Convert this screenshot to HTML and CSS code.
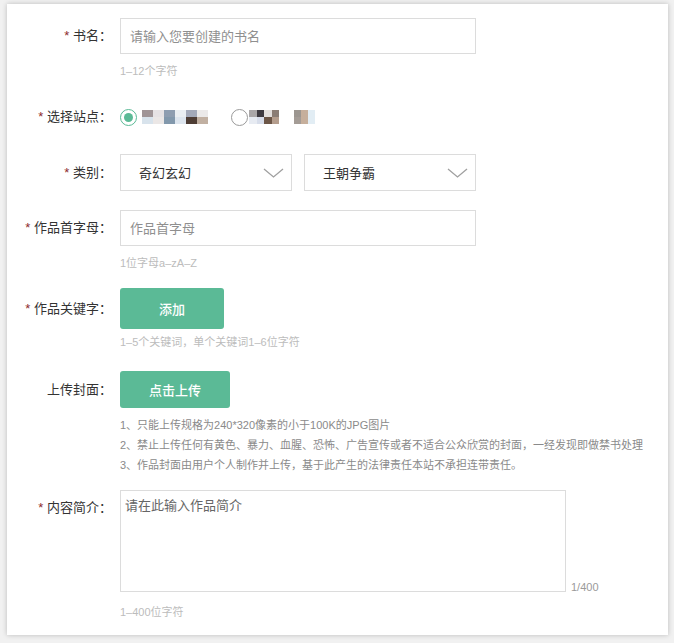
FILE: index.html
```html
<!DOCTYPE html>
<html lang="zh-CN">
<head>
<meta charset="utf-8">
<title>创建作品</title>
<link rel="stylesheet" href="styles.css">
</head>
<body>
<div class="card">
  <div class="row r1">
    <div class="label"><span class="req">*</span> 书名：</div>
    <input class="text-input" type="text" placeholder="请输入您要创建的书名">
    <div class="hint hint-gap">1–12个字符</div>
  </div>

  <div class="row r2">
    <div class="label"><span class="req">*</span> 选择站点：</div>
    <div class="radios">
      <span class="radio on"><span class="dot"></span></span>
      <span class="mosaic m1">
        <span class="col"><i class="a"></i><i class="b"></i></span>
        <span class="col"><i class="c"></i><i class="d"></i></span>
        <span class="col"><i class="e"></i><i class="f"></i></span>
        <span class="col"><i class="g"></i><i class="h"></i></span>
        <span class="col"><i class="i"></i><i class="j"></i></span>
        <span class="col"><i class="k"></i><i class="l"></i></span>
      </span>
      <span class="radio off"></span>
      <span class="mosaic m2">
        <span class="col"><i class="m"></i><i class="n"></i></span>
        <span class="col"><i class="o"></i><i class="p"></i></span>
        <span class="col"><i class="q"></i><i class="r"></i></span>
        <span class="col"><i class="s"></i><i class="t"></i></span>
      </span>
      <span class="mosaic m3">
        <span class="col"><i class="u"></i><i class="u2"></i></span>
        <span class="col"><i class="v"></i><i class="v"></i></span>
        <span class="col"><i class="w"></i><i class="w"></i></span>
      </span>
    </div>
  </div>

  <div class="row r3">
    <div class="label"><span class="req">*</span> 类别：</div>
    <div class="selects">
      <div class="select"><span>奇幻玄幻</span>
        <svg class="chev" width="21" height="10" viewBox="0 0 21 10"><polyline points="1,1 10.5,9 20,1" fill="none" stroke="#a0a0a0" stroke-width="1.3"/></svg>
      </div>
      <div class="select"><span>王朝争霸</span>
        <svg class="chev" width="21" height="10" viewBox="0 0 21 10"><polyline points="1,1 10.5,9 20,1" fill="none" stroke="#a0a0a0" stroke-width="1.3"/></svg>
      </div>
    </div>
  </div>

  <div class="row r4">
    <div class="label"><span class="req">*</span> 作品首字母：</div>
    <input class="text-input" type="text" placeholder="作品首字母">
    <div class="hint hint-gap">1位字母a–zA–Z</div>
  </div>

  <div class="row r5">
    <div class="label"><span class="req">*</span> 作品关键字：</div>
    <button class="btn btn-add" type="button">添加</button>
    <div class="hint hint-gap-sm">1–5个关键词，单个关键词1–6位字符</div>
  </div>

  <div class="row r6">
    <div class="label">上传封面：</div>
    <button class="btn btn-upload" type="button">点击上传</button>
    <div class="notes">
      <div>1、只能上传规格为240*320像素的小于100K的JPG图片</div>
      <div>2、禁止上传任何有黄色、暴力、血腥、恐怖、广告宣传或者不适合公众欣赏的封面，一经发现即做禁书处理</div>
      <div>3、作品封面由用户个人制作并上传，基于此产生的法律责任本站不承担连带责任。</div>
    </div>
  </div>

  <div class="row r7">
    <div class="label label-top"><span class="req">*</span> 内容简介：</div>
    <div class="area-wrap">
      <textarea class="area" placeholder="请在此输入作品简介"></textarea>
      <span class="counter">1/400</span>
    </div>
    <div class="hint hint-gap-lg">1–400位字符</div>
  </div>
</div>
</body>
</html>
```

FILE: styles.css
```css
html, body {
  margin: 0;
}
body {
  padding: 4px 6px 8px 7px;
  background: #f1f1f1;
  font-family: "Liberation Sans", "Noto Sans CJK SC", sans-serif;
}
.card {
  width: 661px;
  height: 631px;
  box-sizing: border-box;
  background: #fff;
  box-shadow: 0 0 5px rgba(0, 0, 0, 0.22);
  padding-top: 14px;
}
.row {
  display: grid;
  grid-template-columns: 105px auto;
  column-gap: 8px;
  align-items: center;
  justify-items: start;
}
.row > :not(.label) {
  grid-column: 2;
}
.label {
  grid-column: 1;
  justify-self: end;
  font-size: 13px;
  line-height: 20px;
  color: #333;
  white-space: nowrap;
}
.req {
  color: #8c2b2b;
}
.label-top {
  align-self: start;
  margin-top: 8px;
}
.r2 { margin-top: 28px; }
.r3 { margin-top: 27px; }
.r4 { margin-top: 19px; }
.r5 { margin-top: 17px; }
.r6 { margin-top: 21px; }
.r7 { margin-top: 15px; }

.text-input {
  width: 356px;
  height: 36px;
  box-sizing: border-box;
  border: 1px solid #dcdcdc;
  padding: 0 9px;
  margin: 0;
  font-family: inherit;
  font-size: 13px;
  color: #333;
  outline: none;
  background: #fff;
}
.text-input::placeholder {
  color: #8f8f8f;
}
.hint {
  font-size: 11px;
  line-height: 16px;
  color: #bcbcbc;
}
.hint-gap { margin-top: 9px; }
.hint-gap-sm { margin-top: 5px; }
.hint-gap-lg { margin-top: 12px; }

.radios {
  display: flex;
  align-items: center;
  height: 20px;
}
.radio {
  width: 17px;
  height: 17px;
  box-sizing: border-box;
  border-radius: 50%;
  display: flex;
  align-items: center;
  justify-content: center;
  flex: none;
}
.radio.on {
  border: 1.5px solid #5bba96;
}
.radio.on .dot {
  width: 9px;
  height: 9px;
  border-radius: 50%;
  background: #5bba96;
}
.radio.off {
  border: 1.5px solid #9a9a9a;
  margin-left: 23px;
}
.mosaic {
  display: flex;
  height: 14px;
}
.m1 { margin-left: 5px; }
.m2 { margin-left: 1px; }
.m3 { margin-left: 15px; }
.col {
  display: flex;
  flex-direction: column;
}
.m1 .col { width: 11px; }
.m2 .col { width: 7.5px; }
.m3 .col { width: 7px; }
.col i {
  display: block;
  height: 7px;
}
.a { background: #a09597; }
.b { background: #d8e3ec; }
.c { background: #e6e2e4; }
.d { background: #ebe7e6; }
.e { background: #8e9db0; }
.f { background: #8298ac; }
.g { background: #eaeef2; }
.h { background: #dde5ee; }
.i { background: #a3a9b9; }
.j { background: #4e3d35; }
.k { background: #ebe9e9; }
.l { background: #c1b0a2; }
.m { background: #aaa7a8; }
.n { background: #e7ebf2; }
.o { background: #3e3b41; }
.p { background: #d7ddea; }
.q { background: #e3dfdd; }
.r { background: #6c5647; }
.s { background: #8b7d75; }
.t { background: #b49d8d; }
.u { background: #9c9690; }
.u2 { background: #a49c96; }
.v { background: #c6af9c; }
.w { background: #e2edf4; }

.selects {
  display: flex;
  gap: 12px;
}
.select {
  width: 172px;
  height: 37px;
  box-sizing: border-box;
  border: 1px solid #dcdcdc;
  display: flex;
  align-items: center;
  justify-content: space-between;
  padding: 0 7px 0 18px;
  font-size: 13px;
  color: #333;
}
.chev {
  display: block;
}

.btn {
  border: none;
  border-radius: 3px;
  background: #5bba96;
  color: #fff;
  font-family: inherit;
  font-size: 13px;
  font-weight: 500;
  margin: 0;
  padding: 0;
  cursor: pointer;
}
.btn-add {
  width: 104px;
  height: 41px;
}
.btn-upload {
  width: 110px;
  height: 37px;
}
.notes {
  margin-top: 7px;
  font-size: 11px;
  line-height: 20px;
  color: #8a8a8a;
  white-space: nowrap;
}

.area-wrap {
  display: flex;
  align-items: flex-end;
}
.area {
  width: 446px;
  height: 102px;
  box-sizing: border-box;
  border: 1px solid #dcdcdc;
  padding: 6px 4px;
  margin: 0;
  resize: none;
  outline: none;
  font-family: inherit;
  font-size: 13px;
  line-height: 18px;
  color: #333;
  display: block;
}
.area::placeholder {
  color: #666;
}
.counter {
  margin-left: 5px;
  margin-bottom: -3px;
  font-size: 11px;
  line-height: 16px;
  color: #9a9a9a;
}
```
